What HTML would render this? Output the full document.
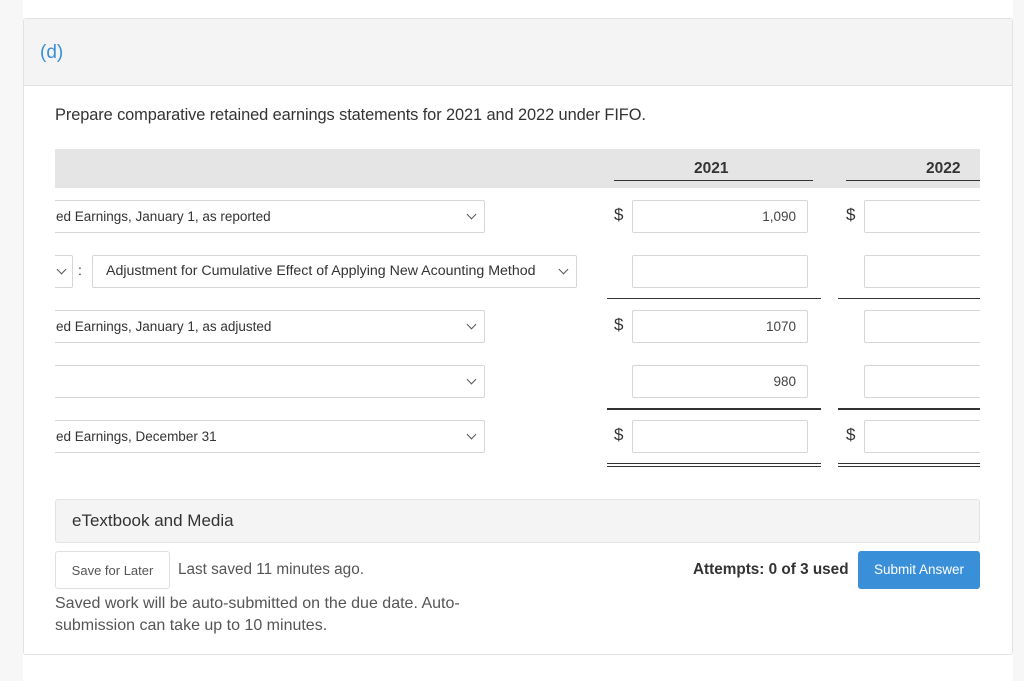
<!DOCTYPE html>
<html><head><style>
*{box-sizing:border-box;margin:0;padding:0}
body{width:1024px;height:681px;overflow:hidden;background:#fff;font-family:"Liberation Sans",sans-serif;color:#333;position:relative}
.a{position:absolute}
.sel{position:absolute;height:33px;border:1px solid #d6d6d6;border-radius:2px;background:#fff;font-size:13.5px;color:#333;line-height:31px;padding-left:10px;white-space:nowrap;overflow:hidden}
.chev{position:absolute;width:7px;height:7px;border-right:1.2px solid #555;border-bottom:1.2px solid #555;transform:rotate(45deg)}
.inp{position:absolute;height:33px;border:1px solid #d6d6d6;border-radius:2px;background:#fff;font-size:13.5px;color:#444;text-align:right;padding-right:11px;line-height:31px}
.d{position:absolute;font-size:17px;color:#333}
.ln{position:absolute;height:1px;background:#333}
</style></head><body>
<div class="a" style="left:0;top:0;width:23px;height:681px;background:#f7f7f7"></div>
<div class="a" style="left:1013px;top:0;width:11px;height:681px;background:#f7f7f7"></div>
<div class="a" style="left:23px;top:18px;width:990px;height:637px;border:1px solid #e3e3e3;border-radius:3px;background:#fff"></div>
<div class="a" style="left:24px;top:19px;width:988px;height:67px;background:#f4f4f4;border-bottom:1px solid #e0e0e0"></div>
<div class="a" style="left:40px;top:42px;font-size:19px;color:#3a8fd9">(d)</div>
<div class="a" style="left:55px;top:106px;font-size:16.4px;color:#333;letter-spacing:-0.1px">Prepare comparative retained earnings statements for 2021 and 2022 under FIFO.</div>

<div class="a" style="left:55px;top:149px;width:925px;height:39px;background:#e5e5e5"></div>
<div class="a" style="left:694px;top:160px;font-size:15.5px;font-weight:bold;color:#333">2021</div>
<div class="a" style="left:926px;top:160px;font-size:15.5px;font-weight:bold;color:#333">2022</div>
<div class="ln" style="left:614px;top:180px;width:199px"></div>
<div class="ln" style="left:846px;top:180px;width:134px"></div>

<div class="a" style="left:55px;top:0;width:925px;height:681px;overflow:hidden">
<div class="sel" style="left:-20px;top:200px;width:450px;padding-left:20px">ed Earnings, January 1, as reported<span class="chev" style="right:9px;top:10px"></span></div>
<div class="sel" style="left:-20px;top:255px;width:38px"><span class="chev" style="right:7px;top:10px"></span></div>
<div class="a" style="left:23px;top:262px;font-size:14px">:</div>
<div class="sel" style="left:37px;top:255px;width:485px;padding-left:13px;font-size:14.2px">Adjustment for Cumulative Effect of Applying New Acounting Method<span class="chev" style="right:9px;top:10px"></span></div>
<div class="sel" style="left:-20px;top:310px;width:450px;padding-left:20px">ed Earnings, January 1, as adjusted<span class="chev" style="right:9px;top:10px"></span></div>
<div class="sel" style="left:-20px;top:365px;width:450px"><span class="chev" style="right:9px;top:10px"></span></div>
<div class="sel" style="left:-20px;top:420px;width:450px;padding-left:20px">ed Earnings, December 31<span class="chev" style="right:9px;top:10px"></span></div>

<div class="d" style="left:559px;top:205px">$</div>
<div class="inp" style="left:577px;top:200px;width:176px">1,090</div>
<div class="d" style="left:791px;top:205px">$</div>
<div class="inp" style="left:809px;top:200px;width:140px"></div>

<div class="inp" style="left:577px;top:255px;width:176px"></div>
<div class="inp" style="left:809px;top:255px;width:140px"></div>
<div class="ln" style="left:552px;top:298px;width:214px"></div>
<div class="ln" style="left:783px;top:298px;width:160px"></div>

<div class="d" style="left:559px;top:315px">$</div>
<div class="inp" style="left:577px;top:310px;width:176px">1070</div>
<div class="inp" style="left:809px;top:310px;width:140px"></div>

<div class="inp" style="left:577px;top:365px;width:176px">980</div>
<div class="inp" style="left:809px;top:365px;width:140px"></div>
<div class="ln" style="left:552px;top:408px;width:214px;height:2px"></div>
<div class="ln" style="left:783px;top:408px;width:160px;height:2px"></div>

<div class="d" style="left:559px;top:425px">$</div>
<div class="inp" style="left:577px;top:420px;width:176px"></div>
<div class="d" style="left:791px;top:425px">$</div>
<div class="inp" style="left:809px;top:420px;width:140px"></div>
<div class="ln" style="left:552px;top:463px;width:214px"></div>
<div class="ln" style="left:552px;top:466px;width:214px"></div>
<div class="ln" style="left:783px;top:463px;width:160px"></div>
<div class="ln" style="left:783px;top:466px;width:160px"></div>
</div>

<div class="a" style="left:55px;top:499px;width:925px;height:44px;background:#f4f4f4;border:1px solid #e2e2e2;border-radius:3px;font-size:17px;color:#333;padding:11px 0 0 16px">eTextbook and Media</div>
<div class="a" style="left:55px;top:551px;width:115px;height:38px;border:1px solid #e0e0e0;border-radius:3px;font-size:13px;color:#555;text-align:center;line-height:38px">Save for Later</div>
<div class="a" style="left:178px;top:561px;font-size:15.3px;color:#555">Last saved 11 minutes ago.</div>
<div class="a" style="left:55px;top:593px;font-size:16px;color:#555;line-height:22px">Saved work will be auto-submitted on the due date. Auto-<br>submission can take up to 10 minutes.</div>
<div class="a" style="left:693px;top:561px;font-size:15.3px;font-weight:bold;color:#333">Attempts: 0 of 3 used</div>
<div class="a" style="left:858px;top:551px;width:122px;height:38px;background:#3a8fd9;border-radius:3px;color:#fff;font-size:13.5px;text-align:center;line-height:38px">Submit Answer</div>
</body></html>
